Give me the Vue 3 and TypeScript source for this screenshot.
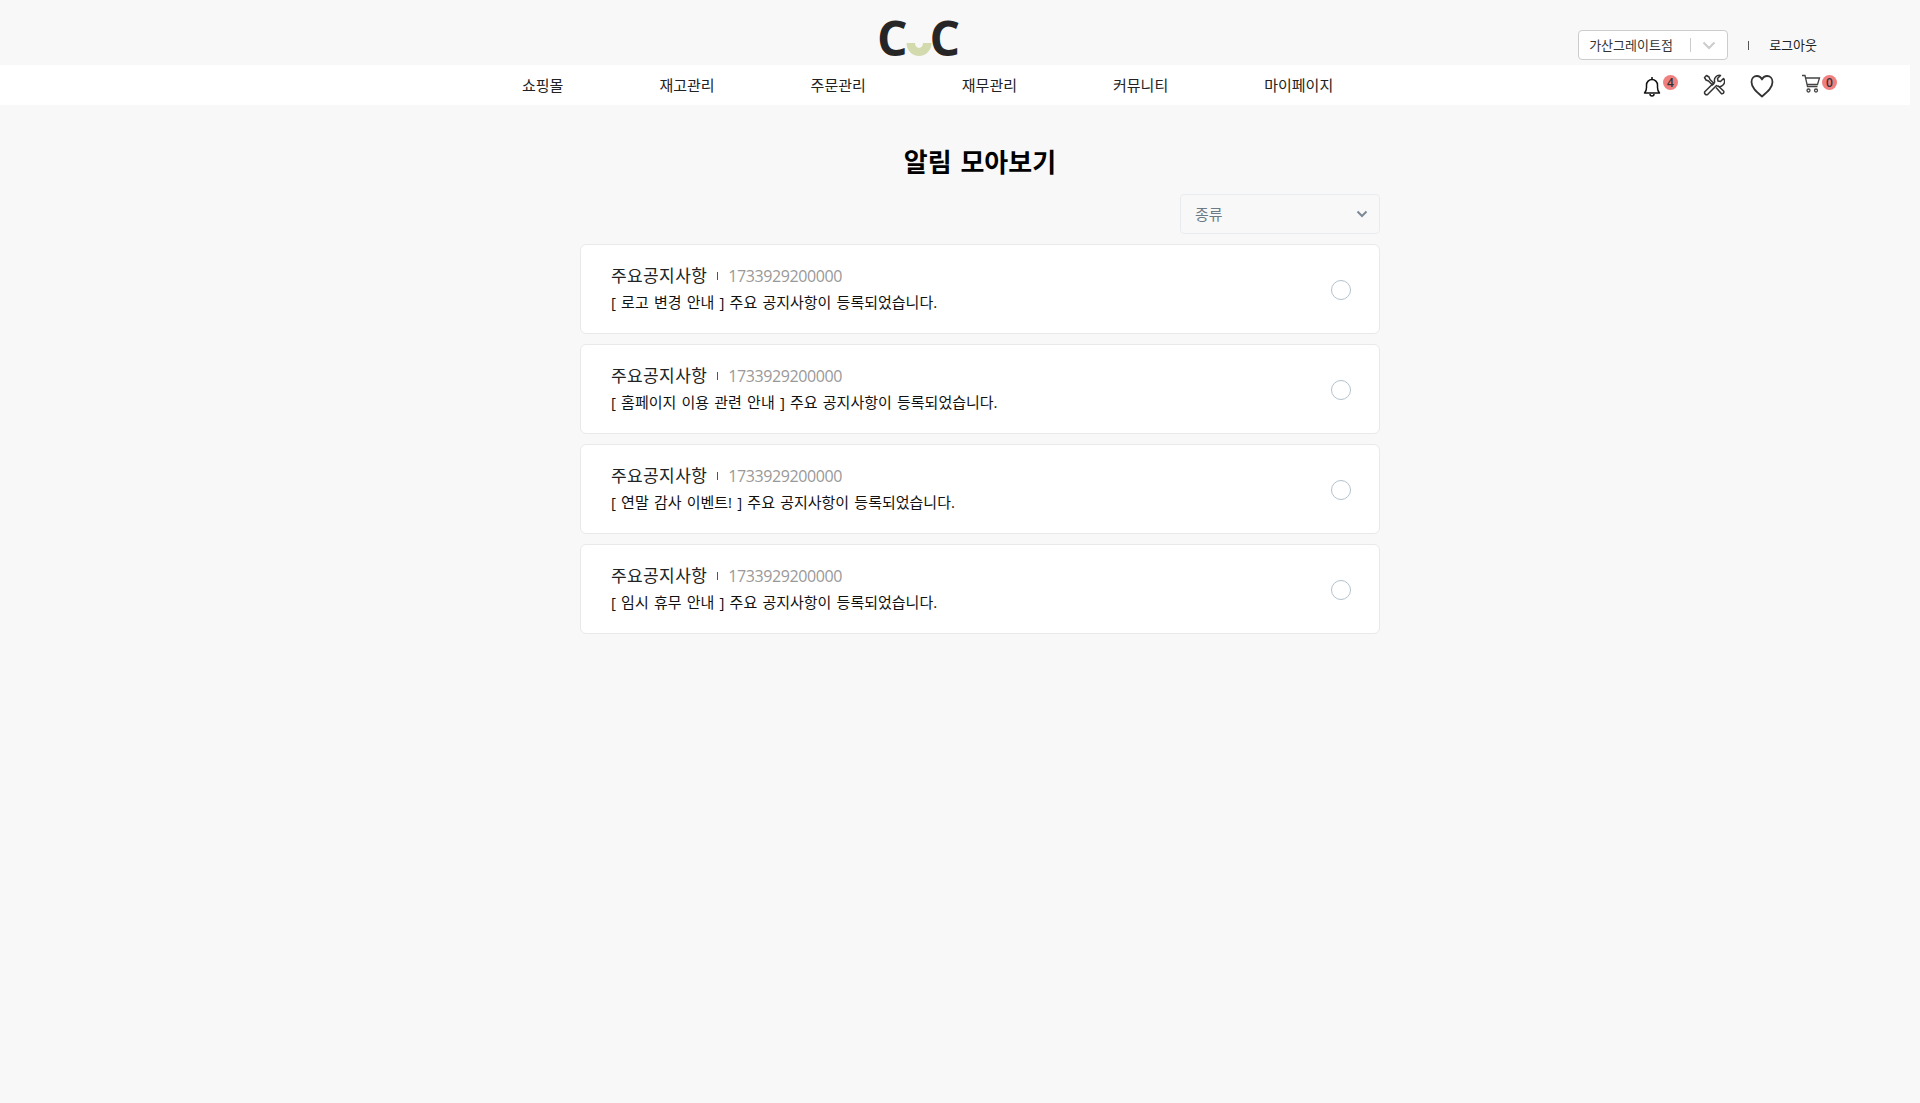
<template>
  <div class="page">
    <header class="header">
      <div class="header-top">
        <div class="logo">
          <span>C</span>
          <svg class="logo-u" width="26" height="22" viewBox="0 0 26 22">
            <path d="M.5 0A12.500 13 0 0 0 25.500 0H17A4 5 0 0 1 9 0Z" transform="translate(0 8)" fill="#d3dbae" />
          </svg>
          <span>C</span>
        </div>
        <div class="user-area">
          <div class="store-select">
            <span class="store-name">가산그레이트점</span>
            <i class="store-line"></i>
            <svg width="14" height="9" viewBox="0 0 14 9"><path d="M1.500 1.500 7 7l5.500-5.500" fill="none" stroke="#ccc" stroke-width="2" /></svg>
          </div>
          <i class="user-line"></i>
          <span class="logout">로그아웃</span>
        </div>
      </div>
      <nav class="nav">
        <ul class="menu">
          <li v-for="item in menus" :key="item">{{ item }}</li>
        </ul>
        <div class="icons">
          <div class="icon bell">
            <svg width="20" height="22" viewBox="0 0 20 22" fill="none" stroke="#111" stroke-width="1.500">
              <path d="M2.500 17c1.500-1.500 2-3 2-5.500V9a5.500 5.500 0 0 1 11 0v2.500c0 2.500.5 4 2 5.500Z" stroke-linejoin="round" />
              <path d="M8 18a2 2 0 0 0 4 0M10 1v2" />
            </svg>
            <span class="badge">4</span>
          </div>
          <div class="icon tools">
            <svg width="22" height="22" viewBox="0 0 22 22" fill="none" stroke="#333" stroke-width="1.500" stroke-linejoin="round">
              <path d="M1.500 3.500 3.500 1.500 6 3l1 2.500 4 4-1.500 1.500-4-4-2.500-1Z" />
              <path d="M20.500 4.500l-3 3-2.500-.5-.5-2.500 3-3a5 5 0 0 0-5.800 6.500L2 17.500a2 2 0 0 0 2.800 2.800l8.700-8.800a5 5 0 0 0 7-7Z" />
              <path d="m13 13.500 5.500 6.200a1.900 1.900 0 0 0 2.300-2.400L15 11.800" />
            </svg>
          </div>
          <div class="icon heart">
            <svg width="24" height="24" viewBox="0 0 24 24" fill="none" stroke="#333" stroke-width="1.800">
              <path d="M12 22.500C6 17.500 1.500 13.500 1.500 8 1.500 4.200 4 2 6.800 2 9 2 11 3.200 12 5.500 13 3.200 15 2 17.200 2 20 2 22.500 4.200 22.500 8 22.500 13.500 18 17.500 12 22.500Z" stroke-linejoin="round" />
            </svg>
          </div>
          <div class="icon cart">
            <svg width="20" height="20" viewBox="0 0 20 20" fill="none" stroke="#444" stroke-width="1.300">
              <path d="M1 1.500h3l2.500 11h10" />
              <path d="M4.500 4h14l-2 6.500H6" />
              <circle cx="7.500" cy="16.500" r="1.500" />
              <circle cx="15" cy="16.500" r="1.500" />
            </svg>
            <span class="badge">0</span>
          </div>
        </div>
      </nav>
    </header>

    <main class="content">
      <h1 class="title">알림 모아보기</h1>
      <div class="filter-row">
        <div class="filter">
          <span>종류</span>
          <svg width="12" height="8" viewBox="0 0 12 8"><path d="M1.500 1.500 6 6l4.500-4.500" fill="none" stroke="#7b8a96" stroke-width="2" /></svg>
        </div>
      </div>
      <ul class="list">
        <li v-for="n in notices" :key="n" class="card">
          <div class="card-text">
            <div class="card-head">
              <strong>주요공지사항</strong>
              <i class="card-line"></i>
              <span class="date">1733929200000</span>
            </div>
            <p class="card-msg">[ {{ n }} ] 주요 공지사항이 등록되었습니다.</p>
          </div>
          <span class="radio"></span>
        </li>
      </ul>
    </main>
  </div>
</template>

<script setup lang="ts">
const menus: string[] = ['쇼핑몰', '재고관리', '주문관리', '재무관리', '커뮤니티', '마이페이지']

const notices: string[] = [
  '로고 변경 안내',
  '홈페이지 이용 관련 안내',
  '연말 감사 이벤트!',
  '임시 휴무 안내'
]
</script>

<style>
html,
body {
  margin: 0;
  background: #f8f8f8;
}
</style>

<style scoped>
.page {
  min-height: 1103px;
  background: #f8f8f8;
  color: #111;
  font-family: 'Open Sans', 'Noto Sans CJK KR', sans-serif;
}

.header-top {
  display: flex;
  align-items: flex-start;
  height: 65px;
  padding: 0 103px 0 877px;
}

.logo {
  display: flex;
  align-items: center;
  height: 38px;
  margin-top: 19px;
  color: #262626;
  font-size: 48px;
  font-weight: 700;
  line-height: 38px;
}

.logo-u {
  margin: 15px -2px 0;
}

.user-area {
  display: flex;
  align-items: center;
  margin: 30px 0 0 auto;
  font-size: 13px;
}

.store-select {
  display: flex;
  align-items: center;
  box-sizing: border-box;
  width: 150px;
  height: 30px;
  padding: 0 11px 0 10px;
  background: #fff;
  border: 1px solid #ccc;
  border-radius: 4px;
  color: #333;
}

.store-name {
  width: 101px;
  margin-top: -1px;
}

.store-line {
  width: 1px;
  height: 14px;
  margin-right: 11px;
  background: #ccc;
}

.user-line {
  width: 1px;
  height: 9px;
  margin: 0 20px;
  background: #555;
}

.logout {
  margin-top: -1px;
  color: #222;
}

.nav {
  display: flex;
  align-items: center;
  width: 1910px;
  height: 40px;
  background: #fff;
}

.menu {
  display: flex;
  gap: 96px;
  margin: -2px 0 0 522px;
  padding: 0;
  list-style: none;
  font-size: 15px;
  color: #222;
}

.icons {
  display: flex;
  align-items: center;
  margin-left: auto;
  padding-right: 89px;
}

.icon {
  position: relative;
  display: flex;
  height: 22px;
}

.bell {
  margin-right: 41px;
}

.bell svg {
  margin-top: 2px;
}

.tools {
  margin-right: 25px;
}

.heart {
  margin-right: 27px;
}

.badge {
  position: absolute;
  top: 1px;
  left: 21px;
  width: 15px;
  height: 15px;
  background: #f08080;
  border-radius: 50%;
  font-size: 12px;
  font-weight: 600;
  line-height: 15px;
  text-align: center;
  color: #333;
}

.content {
  width: 800px;
  margin-left: 580px;
}

.title {
  margin: 40px 0 0;
  font-size: 26px;
  font-weight: 700;
  line-height: 34px;
  word-spacing: 2px;
  text-align: center;
  color: #000;
}

.filter-row {
  display: flex;
  justify-content: flex-end;
  margin-top: 15px;
}

.filter {
  display: flex;
  align-items: center;
  justify-content: space-between;
  box-sizing: border-box;
  width: 200px;
  height: 40px;
  padding: 0 11px 0 14px;
  border: 1px solid #e9ecef;
  border-radius: 4px;
  font-size: 15px;
  color: #6c7a86;
}

.filter span {
  margin-top: -1px;
}

.list {
  display: flex;
  flex-direction: column;
  gap: 10px;
  margin: 10px 0 0;
  padding: 0;
  list-style: none;
}

.card {
  display: flex;
  align-items: center;
  justify-content: space-between;
  box-sizing: border-box;
  height: 90px;
  padding: 0 28px 0 30px;
  background: #fff;
  border: 1px solid #e9e9e9;
  border-radius: 6px;
}

.card-head {
  display: flex;
  align-items: center;
  font-size: 16px;
  line-height: 24px;
}

.card-head strong {
  font-size: 17px;
  font-weight: 400;
  letter-spacing: .4px;
  color: #222;
}

.card-line {
  width: 1px;
  height: 8px;
  margin: 0 10px;
  background: #555;
}

.date {
  letter-spacing: -.4px;
  color: #999;
}

.card-msg {
  margin: 2px 0 0;
  font-size: 15px;
  line-height: 24px;
  word-spacing: 1.300px;
  color: #111;
}

.radio {
  box-sizing: border-box;
  width: 20px;
  height: 20px;
  margin-top: 1px;
  border: 1px solid #b4c2cc;
  border-radius: 50%;
}
</style>
